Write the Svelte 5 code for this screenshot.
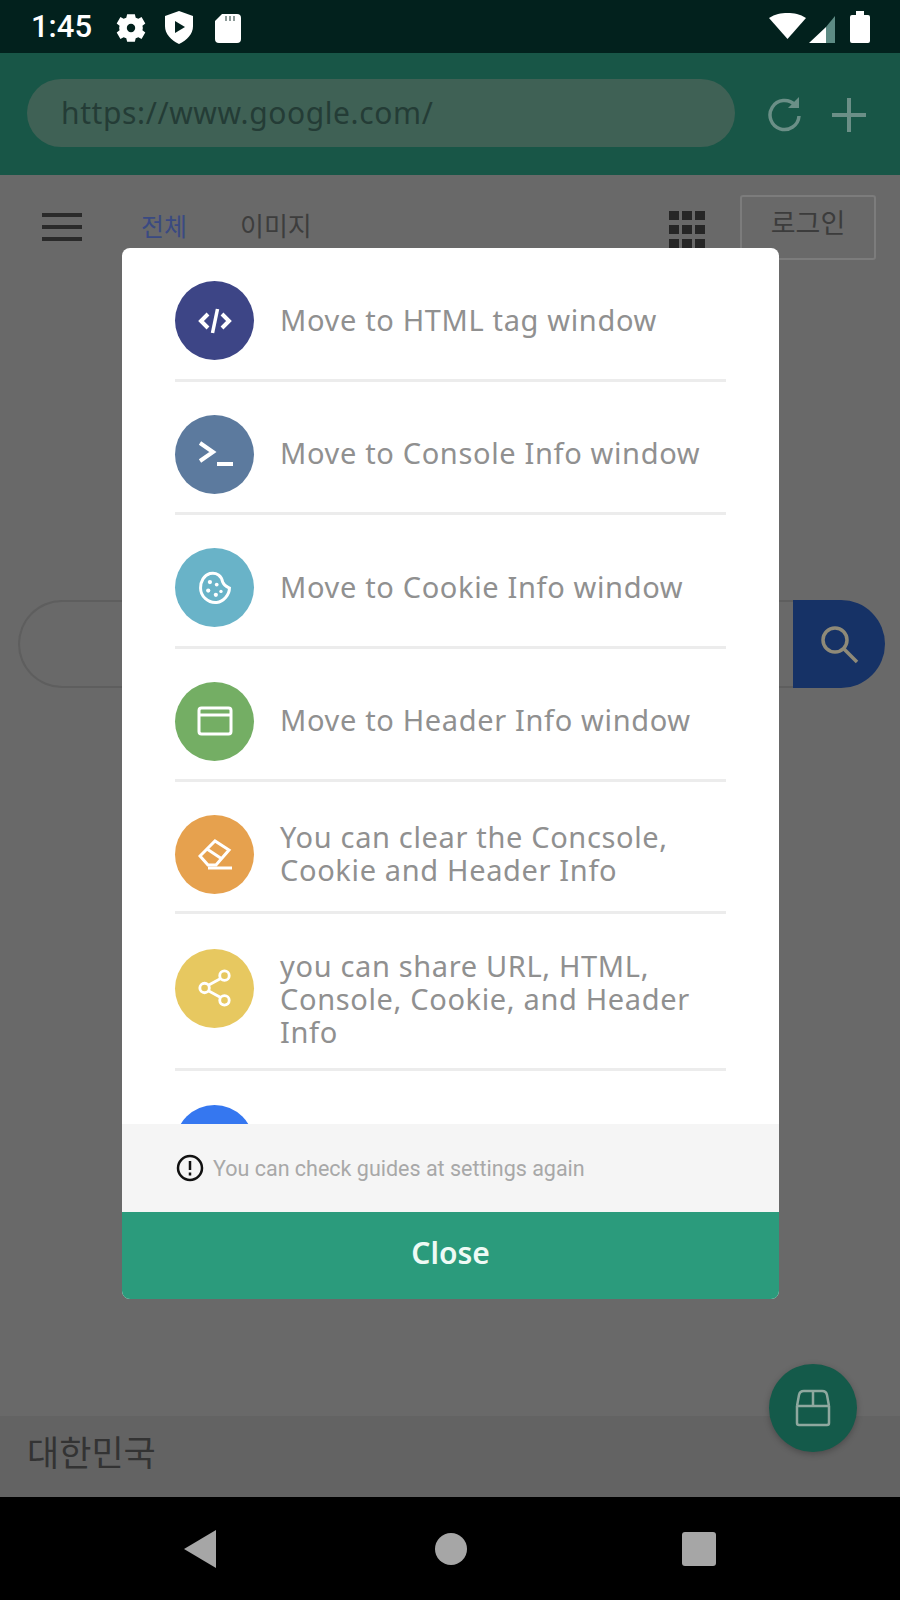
<script>
  const rows = [
    { c: '#3d4586', t: 'Move to HTML tag window', i: 'html' },
    { c: '#5c7a9e', t: 'Move to Console Info window', i: 'console' },
    { c: '#69b3c8', t: 'Move to Cookie Info window', i: 'cookie' },
    { c: '#74ae64', t: 'Move to Header Info window', i: 'header' },
    { c: '#e6a14e', t: 'You can clear the Concsole, Cookie and Header Info', i: 'eraser', k: 'two' },
    { c: '#e7c860', t: 'you can share URL, HTML, Console, Cookie, and Header Info', i: 'share', k: 'three' }
  ];
</script>

<div class="screen">
  <div class="status">
    <span class="time">1:45</span>
    <svg class="st" width="125" height="34" viewBox="0 0 125 34" fill="#fff">
      <g transform="translate(15 18)">
        <path d="M-3.500-12.500h7l.8 3.200 2.400 1 2.900-1.600 3.400 5.800-2.600 2a6 6 0 0 1 0 4.200l2.600 2-3.400 5.800-2.900-1.600-2.400 1-.8 3.200h-7l-.8-3.200-2.400-1-2.900 1.600-3.400-5.800 2.600-2a6 6 0 0 1 0-4.200l-2.600-2 3.400-5.800 2.900 1.600 2.400-1z" transform="scale(1.100)"/>
        <circle r="4.200" fill="#02211d"/>
      </g>
      <path d="M63 1l14 5v10c0 8-6 14-14 18-8-4-14-10-14-18V6z"/>
      <path d="M59 11l10 6-10 6z" fill="#02211d"/>
      <path d="M106 4h15a4 4 0 0 1 4 4v21a4 4 0 0 1-4 4h-18a4 4 0 0 1-4-4V11z"/>
      <path d="M109 6h2v5h-2zM113 6h2v5h-2zM117 6h2v5h-2z" fill="#02211d" opacity=".45"/>
    </svg>
    <span class="grow"></span>
    <svg width="101" height="34" viewBox="0 0 101 34" fill="#fff">
      <path d="M0 8C6 4 12 3 18.500 3S31 4 37 8L18.500 29z"/>
      <path d="M40 33L57 17v16z"/>
      <path d="M57 17L66 6v27h-9z" fill="#5d8b84"/>
      <path d="M87 5V1h8v4h4a2 2 0 0 1 2 2v24a2 2 0 0 1-2 2H83a2 2 0 0 1-2-2V7a2 2 0 0 1 2-2z"/>
    </svg>
  </div>

  <div class="toolbar">
    <div class="url">https://www.google.com/</div>
    <svg class="reload" width="36" height="40" viewBox="0 0 36 40" fill="none" stroke="#6b8f87" stroke-width="3.500">
      <path d="M28 11a14.500 14.500 0 1 0 4 11"/>
      <path d="M32 3v11H21" fill="#6b8f87" stroke="none"/>
    </svg>
    <svg class="plus" width="34" height="34" viewBox="0 0 34 34" stroke="#6b8f87" stroke-width="4"><path d="M17 0v34M0 17h34"/></svg>
  </div>

  <div class="page">
    <div class="nav">
      <div class="burger"><i></i><i></i><i></i></div>
      <span class="tab active">전체</span>
      <span class="tab">이미지</span>
      <span class="grow"></span>
      <div class="apps">{#each Array(9) as _}<i></i>{/each}</div>
      <div class="login">로그인</div>
    </div>
    <div class="search">
      <div class="input"></div>
      <div class="go">
        <svg width="42" height="42" viewBox="0 0 42 42" fill="none" stroke="#8f8a78" stroke-width="3.500"><circle cx="17" cy="17" r="12"/><path d="M26 26l13 13"/></svg>
      </div>
    </div>
    <div class="foot">대한민국</div>
    <div class="fab">
      <svg width="38" height="38" viewBox="0 0 38 38" fill="none" stroke="#8fa89f" stroke-width="2.500"><path d="M3 17l2-11a5 5 0 0 1 5-4h18a5 5 0 0 1 5 4l2 11M3 17v17a2 2 0 0 0 2 2h28a2 2 0 0 0 2-2V17M3 17h32M19 2v15"/></svg>
    </div>
  </div>

  <div class="navbar">
    <svg width="36" height="40" viewBox="0 0 36 40" fill="#a6a6a6"><path d="M32 1v38L0 20z"/></svg>
    <span class="home"></span>
    <span class="recent"></span>
  </div>

  <div class="modal">
    <div class="list">
      {#each rows as r}
        <div class="row {r.k ?? ''}">
          <div class="circle" style="background:{r.c}">
            {#if r.i === 'html'}
              <svg width="36" height="32" viewBox="0 0 36 32" fill="none" stroke="#fff" stroke-width="4"><path d="M11 9l-7 7 7 7M25 9l7 7-7 7"/><path d="M20.500 4l-5 24" stroke-width="3.500"/></svg>
            {:else if r.i === 'console'}
              <svg class="nudge" width="40" height="32" viewBox="0 0 40 32" fill="none" stroke="#fff" stroke-width="4"><path d="M4 5l13 9-13 9"/><path d="M21 26h16"/></svg>
            {:else if r.i === 'cookie'}
              <svg width="34" height="34" viewBox="0 0 40 40" fill="none" stroke="#fff" stroke-width="3.500"><path d="M14 3c8-2 14 3 15 10 2 5 6 6 8 7 0 8-7 16-15 17C12 38 3 30 3 20 3 12 7 5 14 3z"/><circle cx="14" cy="13" r="2.500" fill="#fff" stroke="none"/><circle cx="22" cy="16" r="2.200" fill="#fff" stroke="none"/><circle cx="12" cy="23" r="2.500" fill="#fff" stroke="none"/><circle cx="21" cy="28" r="2.500" fill="#fff" stroke="none"/><circle cx="27" cy="24" r="2" fill="#fff" stroke="none"/></svg>
            {:else if r.i === 'header'}
              <svg width="36" height="30" viewBox="0 0 36 30" fill="none" stroke="#fff" stroke-width="3"><rect x="2" y="2" width="32" height="26" rx="2.500"/><path d="M2 9h32"/></svg>
            {:else if r.i === 'eraser'}
              <svg class="nudge" width="36" height="32" viewBox="0 0 36 32" fill="none" stroke="#fff" stroke-width="3"><path d="M2 17L17 2l14 9-13 15H10z"/><path d="M9 10l15 10"/><path d="M10 29h24"/></svg>
            {:else}
              <svg width="36" height="40" viewBox="0 0 38 40" fill="none" stroke="#fff" stroke-width="3"><circle cx="8" cy="20" r="5"/><circle cx="29" cy="7" r="5"/><circle cx="29" cy="33" r="5"/><path d="M12 17l13-7M12 23l13 7"/></svg>
            {/if}
          </div>
          <div class="label">{r.t}</div>
        </div>
      {/each}
      <div class="row last"><div class="circle" style="background:#3577f0"></div></div>
    </div>
    <div class="notice">
      <svg width="28" height="28" viewBox="0 0 28 28" fill="none" stroke="#111" stroke-width="2.500"><circle cx="14" cy="14" r="12"/><path d="M14 7v9M14 18.500v3"/></svg>
      <span>You can check guides at settings again</span>
    </div>
    <div class="close">Close</div>
  </div>
</div>

<style>
  :global(body) { margin: 0; }
  .screen { position: relative; width: 900px; height: 1600px; overflow: hidden; background: #696969; font-family: "Noto Sans", "Noto Sans CJK KR", sans-serif; display: flex; flex-direction: column; }
  .grow { flex: 1; }
  .status { height: 53px; flex: none; box-sizing: border-box; background: #02211d; display: flex; align-items: center; padding: 0 30px 0 31px; color: #fff; }
  .time { width: 85px; flex: none; font: 500 31px "Roboto", sans-serif; }
  .toolbar { height: 122px; flex: none; box-sizing: border-box; background: #185647; display: flex; align-items: center; padding: 0 33px 0 27px; }
  .url { width: 708px; height: 68px; box-sizing: border-box; margin-top: -3px; background: #3f6155; border-radius: 34px; padding-left: 34px; line-height: 68px; font-size: 30px; color: #243c36; letter-spacing: .6px; white-space: nowrap; }
  .reload { margin-left: 32px; }
  .plus { margin-left: 29px; margin-top: 2px; }
  .page { position: relative; flex: 1; background: #696969; }
  .nav { display: flex; align-items: center; height: 84px; padding: 20px 24px 0 42px; box-sizing: border-box; }
  .burger { width: 40px; display: flex; flex-direction: column; gap: 8px; }
  .burger i { display: block; height: 4px; background: #2a2a2a; }
  .tab { font-size: 26px; color: #3d3d3d; margin-top: -4px; }
  .tab.active { color: #3a4a82; margin-left: 59px; font-size: 25px; }
  .tab + .tab { margin-left: 53px; }
  .apps { width: 36px; display: grid; grid-template-columns: repeat(3, 10px); gap: 5px 3px; margin-right: 35px; margin-top: 4px; }
  .apps i { display: block; height: 9px; background: #262626; }
  .login { width: 136px; height: 65px; box-sizing: border-box; border: 2px solid #7c7c7c; border-radius: 3px; text-align: center; line-height: 52px; font-size: 27px; color: #3c3c3c; margin-top: 1px; }
  .search { position: absolute; top: 425px; left: 18px; display: flex; width: 867px; height: 88px; }
  .input { flex: 1; border: 2px solid #5e5e5e; border-right: none; border-radius: 44px 0 0 44px; }
  .go { width: 92px; background: #163266; border-radius: 0 46px 46px 0; display: flex; align-items: center; justify-content: center; }
  .foot { position: absolute; left: 0; right: 0; bottom: 0; height: 81px; box-sizing: border-box; padding-left: 27px; background: #636363; font-size: 35px; color: #333; line-height: 74px; }
  .fab { position: absolute; left: 769px; top: 1189px; width: 88px; height: 88px; border-radius: 50%; background: #145a4a; display: flex; align-items: center; justify-content: center; box-shadow: 0 2px 6px rgba(0,0,0,.25); }
  .navbar { height: 103px; flex: none; background: #000; display: flex; align-items: center; box-sizing: border-box; padding: 0 184px; justify-content: space-between; }
  .home { width: 32px; height: 32px; border-radius: 50%; background: #a6a6a6; }
  .recent { width: 34px; height: 34px; border-radius: 3px; background: #a6a6a6; }
  .modal { position: absolute; left: 122px; top: 248px; width: 657px; height: 1051px; background: #fff; border-radius: 8px; overflow: hidden; display: flex; flex-direction: column; }
  .list { height: 876px; overflow: hidden; padding: 0 53px; box-sizing: border-box; flex: none; }
  .row { display: flex; align-items: center; gap: 26px; padding: 33px 0 18.500px; border-bottom: 3px solid #ececec; }
  .row.two { padding-bottom: 16.500px; }
  .row.three { align-items: flex-start; padding: 35px 0 20px; }
  .row.last { border: none; padding-top: 34px; }
  .circle { flex: none; width: 79px; height: 79px; border-radius: 50%; display: flex; align-items: center; justify-content: center; }
  .nudge { margin-left: 2px; }
  .label { font-size: 29px; line-height: 33px; color: #909090; letter-spacing: .65px; padding-bottom: 3px; }
  .row.three .label { padding-bottom: 0; }
  .notice { height: 88px; flex: none; background: #f5f5f5; display: flex; align-items: center; gap: 9px; padding-left: 54px; font-size: 21.500px; color: #a8a8a8; font-family: "Roboto", sans-serif; }
  .close { flex: 1; background: #2b9b7c; color: #eefaf5; display: flex; align-items: center; justify-content: center; font-size: 30px; font-weight: 600; padding-bottom: 6px; }
</style>
